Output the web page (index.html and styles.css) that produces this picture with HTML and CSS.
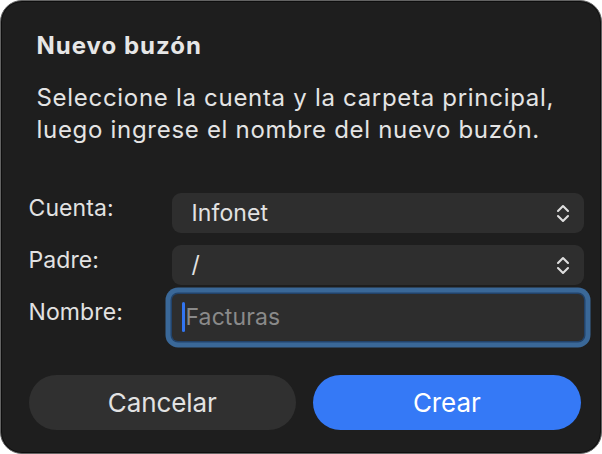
FILE: index.html
```html
<!DOCTYPE html>
<html lang="es">
<head>
<meta charset="utf-8">
<link rel="stylesheet" href="styles.css">
</head>
<body>
<div class="dialog">
  <h1 class="title">Nuevo buzón</h1>
  <p class="message">Seleccione la cuenta y la carpeta principal,<br>luego ingrese el nombre del nuevo buzón.</p>
  <div class="form">
    <div class="label">Cuenta:</div>
    <div class="select"><span>Infonet</span>
      <svg class="chev" width="14" height="19" viewBox="0 0 14 19"><path d="M2 7 L7 2 L12 7 M2 12 L7 17 L12 12" fill="none" stroke="#dedede" stroke-width="2.1" stroke-linecap="round" stroke-linejoin="round"/></svg>
    </div>
    <div class="label">Padre:</div>
    <div class="select"><span>/</span>
      <svg class="chev" width="14" height="19" viewBox="0 0 14 19"><path d="M2 7 L7 2 L12 7 M2 12 L7 17 L12 12" fill="none" stroke="#dedede" stroke-width="2.1" stroke-linecap="round" stroke-linejoin="round"/></svg>
    </div>
    <div class="label label-name">Nombre:</div>
    <div class="field"><span class="caret"></span><span class="placeholder">Facturas</span></div>
  </div>
  <div class="buttons">
    <div class="btn btn-cancel">Cancelar</div>
    <div class="btn btn-primary">Crear</div>
  </div>
</div>
</body>
</html>
```
FILE: styles.css
```css
html, body {
  margin: 0;
  padding: 0;
  background: #ffffff;
}
body {
  font-family: Inter, "Noto Sans", sans-serif;
  -webkit-font-smoothing: antialiased;
}
.dialog {
  box-sizing: border-box;
  width: 602px;
  height: 454px;
  background: #1e1e1e;
  border: 1.5px solid #636363;
  border-radius: 22px;
  box-shadow: inset 0 0 0 1px #0e0e0e;
  padding: 0 20.5px 0 27.5px;
  display: flex;
  flex-direction: column;
}
.title {
  margin: 30.5px 0 0 8px;
  font-size: 24px;
  font-weight: 700;
  line-height: 28px;
  color: #e6e6e6;
  letter-spacing: 1px;
}
.message {
  margin: 22px 0 0 8px;
  font-size: 24px;
  line-height: 32px;
  color: #e4e4e4;
  letter-spacing: 0.7px;
  white-space: nowrap;
}
.form {
  margin: 47.5px -3px 0 0;
  display: grid;
  grid-template-columns: 143px 1fr;
  row-gap: 12px;
}
.label {
  font-size: 23px;
  line-height: 30px;
  color: #e2e2e2;
  letter-spacing: 0.1px;
}
.label-name { margin-top: -3px; padding-top: 3px; }
.select {
  height: 40px;
  background: #2e2e2e;
  border-radius: 9px;
  display: flex;
  align-items: center;
  justify-content: space-between;
  padding: 0 14px 0 20px;
  font-size: 23px;
  color: #e2e2e2;
  letter-spacing: 0.1px;
}
.chev { display: block; }
.field {
  margin-top: -3px;
  height: 47px;
  box-sizing: border-box;
  background: #2d2d2d;
  border-radius: 6px;
  box-shadow: 0 0 0 1.5px #22436a, 0 0 0 6.5px #3a6898;
  display: flex;
  align-items: center;
  padding: 0 0 2px 10px;
  font-size: 23px;
  letter-spacing: 0.1px;
}
.caret {
  width: 3.5px;
  height: 30px;
  background: #3275f0;
  border-radius: 1.5px;
  margin-right: 0.5px;
}
.placeholder { color: #8a8a8a; }
.buttons {
  margin-top: auto;
  margin-bottom: 23px;
  display: flex;
  gap: 17px;
}
.btn {
  flex: 1;
  height: 55px;
  border-radius: 28px;
  display: flex;
  align-items: center;
  justify-content: center;
  font-size: 26px;
  color: #e2e2e2;
  letter-spacing: -0.1px;
}
.btn-cancel { background: #303030; }
.btn-primary { background: #3579f6; color: #ffffff; }
```
